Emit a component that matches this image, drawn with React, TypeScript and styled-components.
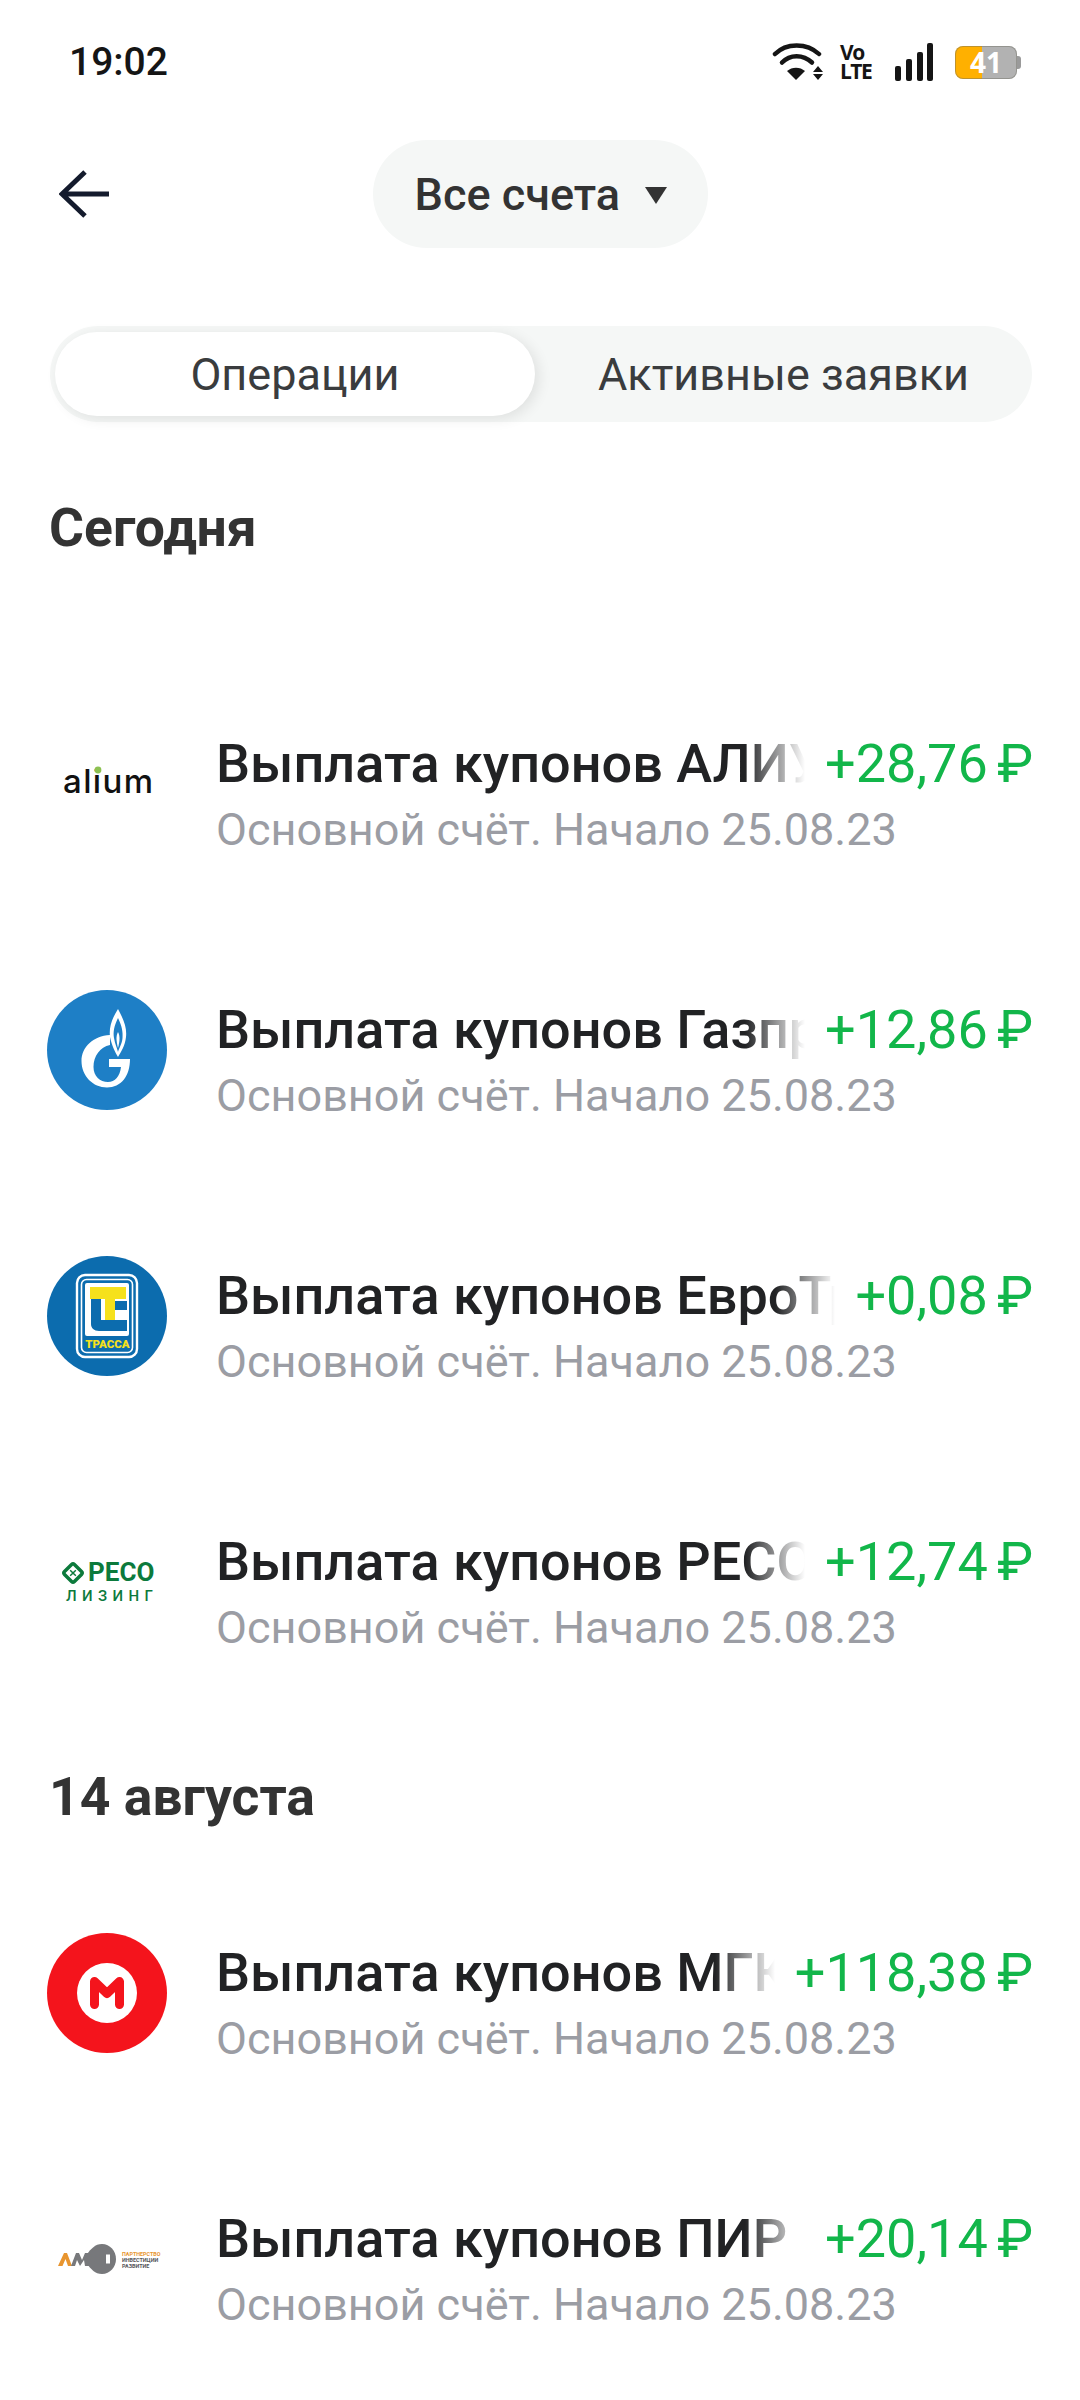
import React from 'react'
import styled, { createGlobalStyle } from 'styled-components'

const Global = createGlobalStyle`
  html, body {
    margin: 0;
    padding: 0;
    background: #fff;
  }
  body {
    font-family: Roboto, "Noto Sans", "Liberation Sans", sans-serif;
  }
`

const Screen = styled.div`
  width: 1080px;
  height: 2400px;
  overflow: hidden;
  background: #fff;
  box-sizing: border-box;
`

const StatusBar = styled.div`
  height: 132px;
  box-sizing: border-box;
  padding: 40px 60px 0 69px;
  display: flex;
  justify-content: space-between;
  align-items: flex-start;
`

const Clock = styled.div`
  font-size: 39px;
  line-height: 44px;
  font-weight: 500;
  color: #151515;
`

const StatusIcons = styled.div`
  display: flex;
  align-items: center;
  height: 44px;
`

const VoLte = styled.div`
  width: 32px;
  margin: 0 23px 0 16px;
  color: #151515;
  font-family: "Open Sans", Roboto, sans-serif;
  font-weight: 700;
  font-size: 21px;
  line-height: 19px;
  letter-spacing: -1.5px;
  span {
    display: block;
  }
`

const Battery = styled.div`
  position: relative;
  width: 62px;
  height: 33px;
  margin-left: 22px;
  margin-right: 3px;
  border-radius: 8px;
  background: linear-gradient(90deg, #ffb000 0 27px, #b2b2b2 27px 100%);
  box-shadow: inset 0 0 0 1px rgba(110, 110, 100, 0.45);
  color: #fff;
  font-family: "Open Sans", Roboto, sans-serif;
  font-weight: 700;
  font-size: 28px;
  line-height: 33px;
  text-align: center;
  &::after {
    content: '';
    position: absolute;
    right: -4px;
    top: 10px;
    width: 4px;
    height: 13px;
    border-radius: 0 3px 3px 0;
    background: #9a9a9a;
  }
`

const NavBar = styled.div`
  height: 124px;
  display: grid;
  grid-template-columns: 1fr auto 1fr;
  align-items: center;
  padding: 0 59px;
  box-sizing: border-box;
`

const BackButton = styled.div`
  display: flex;
  align-items: center;
`

const AccountPill = styled.div`
  height: 108px;
  width: 335px;
  box-sizing: border-box;
  border-radius: 54px;
  background: #f5f7f6;
  padding-left: 42px;
  display: flex;
  align-items: center;
  gap: 25px;
  font-size: 45px;
  color: #333;
  font-weight: 500;
`

const Caret = styled.div`
  width: 0;
  height: 0;
  margin-top: 3px;
  border-left: 11px solid transparent;
  border-right: 11px solid transparent;
  border-top: 17px solid #333;
`

const Tabs = styled.div`
  margin: 70px 48px 0 50px;
  height: 96px;
  box-sizing: border-box;
  padding: 6px 0 6px 5px;
  border-radius: 48px;
  background: #f5f7f6;
  display: flex;
`

const Tab = styled.div<{ $active?: boolean }>`
  flex: ${p => (p.$active ? '0 0 480px' : '1')};
  border-radius: 42px;
  display: flex;
  align-items: center;
  justify-content: center;
  font-size: 45px;
  color: #3a3c3e;
  background: ${p => (p.$active ? '#fff' : 'transparent')};
  box-shadow: ${p => (p.$active ? '4px 3px 14px rgba(0, 0, 0, 0.09)' : 'none')};
`

const DayTitle = styled.h2<{ $first?: boolean }>`
  margin: 0;
  padding: ${p => (p.$first ? '76px 49px 93px' : '52px 49px 33px')};
  font-size: 53.5px;
  line-height: 60px;
  font-weight: 700;
  color: #333;
`

const Row = styled.div`
  height: 266px;
  box-sizing: border-box;
  padding: 0 47px;
  display: flex;
  align-items: center;
  gap: 49px;
`

const LogoBox = styled.div`
  flex: 0 0 120px;
  height: 120px;
`

const RowBody = styled.div`
  flex: 1;
  min-width: 0;
  padding-top: 20px;
`

const TopLine = styled.div`
  display: flex;
  align-items: center;
  gap: 20px;
`

const RowTitle = styled.div`
  position: relative;
  flex: 1;
  min-width: 0;
  overflow: hidden;
  white-space: nowrap;
  font-size: 54px;
  line-height: 64px;
  font-weight: 500;
  color: #212224;
  &::after {
    content: '';
    position: absolute;
    right: 0;
    top: 0;
    bottom: 0;
    width: 60px;
    background: linear-gradient(90deg, rgba(255, 255, 255, 0), #fff 100%);
  }
`

const Amount = styled.div`
  flex: none;
  font-size: 54px;
  line-height: 64px;
  color: #12b64a;
  white-space: nowrap;
  word-spacing: -4px;
`

const RowSub = styled.div`
  margin-top: 8px;
  font-size: 45px;
  line-height: 52px;
  color: #9b9da4;
  white-space: nowrap;
`

const WifiIcon = () => (
  <svg width="52" height="38" viewBox="0 0 52 38">
    <g fill="none" stroke="#151515" strokeWidth="4.5" strokeLinecap="round">
      <path d="M3 11 C14 -0.500 35 -0.500 47 11" />
      <path d="M10 19.500 C18 11 31 11 40 19.500" />
    </g>
    <path d="M15 28 C20 23.500 28 23.500 33 28 L24 37 Z" fill="#151515" />
    <path d="M41 29 L46 23 L51 29 Z M41 31 L51 31 L46 37 Z" fill="#151515" />
  </svg>
)

const SignalIcon = () => (
  <svg width="38" height="38" viewBox="0 0 38 38">
    <g fill="#151515">
      <rect x="0" y="23" width="6" height="15" rx="2" />
      <rect x="11" y="16" width="6" height="22" rx="2" />
      <rect x="22" y="9" width="6" height="29" rx="2" />
      <rect x="32" y="0" width="6" height="38" rx="2" />
    </g>
  </svg>
)

const BackArrow = () => (
  <svg width="50" height="48" viewBox="0 0 50 48">
    <path
      d="M26 2 L3 24 L26 46 M3 24 L50 24"
      fill="none"
      stroke="#141b2d"
      strokeWidth="5"
    />
  </svg>
)

const AliumLogo = () => (
  <svg width="120" height="120" viewBox="0 0 120 120">
    <text x="16" y="69" fontFamily="Inter, Lato, sans-serif" fontWeight="500" fontSize="33" letterSpacing="1.400" fill="#111">
      alium
    </text>
    <circle cx="51" cy="46" r="3.400" fill="#8cc152" />
  </svg>
)

const GazpromLogo = () => (
  <svg width="120" height="120" viewBox="0 0 120 120">
    <circle cx="60" cy="60" r="60" fill="#1e7fc6" />
    <path
      d="M71 19 C64 30 62 38 63 47 C65 56 68 62 71 67 C74 62 78 56 79 47 C80 38 77 30 71 19 Z"
      fill="#fff"
    />
    <path
      d="M71 28 C67 36 66 42 67 48 C68 54 70 58 71 62 C72 58 75 54 75.500 48 C76 42 75 36 71 28 Z"
      fill="#1e7fc6"
    />
    <path
      d="M71 42 C69 46 69 50 71 58 C73 50 73 46 71 42 Z"
      fill="#fff"
    />
    <path
      d="M63 45 C46 46 34.500 57 34.500 71 C34.500 86 46 97.500 60 97.500 C74 97.500 83 86 83 69 L62 69 L62 77 L74 77 C73 86 68 92 61 92 C53 92 46.500 86 46.500 77 C46.500 66 53 57 63 55 Z"
      fill="#fff"
    />
  </svg>
)

const TrassaLogo = () => (
  <svg width="120" height="120" viewBox="0 0 120 120">
    <circle cx="60" cy="60" r="60" fill="#0c6cae" />
    <rect x="30" y="19" width="60" height="82" rx="8" fill="none" stroke="#fff" strokeWidth="2.400" />
    <rect x="34.500" y="23.500" width="51" height="73" rx="5" fill="none" stroke="#fff" strokeWidth="1.600" />
    <rect x="38" y="27" width="44" height="53" rx="2" fill="#fff" />
    <path d="M44 43 L58 43 L58 64 L80 64 L80 75 L52 75 C47 75 44 72 44 68 Z" fill="#0c6cae" />
    <rect x="54" y="43" width="4" height="21" fill="#fff" />
    <rect x="68" y="45" width="12" height="9" fill="#0c6cae" />
    <rect x="43" y="31" width="36" height="12" fill="#f6e11c" />
    <rect x="58" y="43" width="10" height="21" fill="#f6e11c" />
    <text x="60.500" y="92" textAnchor="middle" fontFamily="Roboto, sans-serif" fontWeight="900" fontSize="11.500" fill="#f6e11c">
      ТРАССА
    </text>
  </svg>
)

const ResoLogo = () => (
  <svg width="120" height="120" viewBox="0 0 120 120">
    <g transform="translate(26 51) rotate(45)">
      <rect x="-7" y="-7" width="14" height="14" rx="2" fill="none" stroke="#0c7a3c" strokeWidth="3.500" />
      <path d="M-4 0 L4 0 M0 -4 L0 4" stroke="#0c7a3c" strokeWidth="1.500" />
    </g>
    <text x="41" y="59" fontFamily="Roboto, sans-serif" fontWeight="700" fontSize="26" fill="#0c7a3c">
      РЕСО
    </text>
    <text x="19" y="79" fontFamily="Roboto, sans-serif" fontWeight="500" fontSize="15" letterSpacing="5.400" fill="#0c7a3c">
      ЛИЗИНГ
    </text>
  </svg>
)

const MgkLogo = () => (
  <svg width="120" height="120" viewBox="0 0 120 120">
    <circle cx="60" cy="60" r="60" fill="#f4141c" />
    <circle cx="60" cy="60" r="30" fill="#fff" />
    <path
      d="M47.500 71.500 L47.500 48.500 L60 60.500 L72.500 48.500 L72.500 71.500"
      fill="none"
      stroke="#f4141c"
      strokeWidth="9"
      strokeLinecap="round"
      strokeLinejoin="round"
    />
  </svg>
)

const AmoLogo = () => (
  <svg width="120" height="120" viewBox="0 0 120 120">
    <path d="M11 67 L17 54 L20 54 L25 67 L21 67 L18.500 60 L15.500 67 Z" fill="#e8952f" />
    <path d="M24 67 L29 54 L32 54 L35 61 L38 54 L42 54 L42 67 L38 67 L37 61 L33 67 L30 61 L28 67 Z" fill="#77787b" />
    <path d="M40 55 C44 50 48 45 55 45 C63 45 69 52 69 60 C69 68 63 75 55 75 C48 75 44 70 40 65 Z" fill="#77787b" />
    <rect x="59" y="55.500" width="4" height="9" fill="#fff" />
    <g fontFamily="Roboto, sans-serif" fontWeight="700" fontSize="5.400">
      <text x="75" y="57" fill="#e8952f">ПАРТНЕРСТВО</text>
      <text x="75" y="63" fill="#55565a">ИНВЕСТИЦИИ</text>
      <text x="75" y="69" fill="#55565a">РАЗВИТИЕ</text>
    </g>
  </svg>
)

type Payment = {
  name: string
  amount: string
  logo: React.ReactNode
}

const today: Payment[] = [
  { name: 'Выплата купонов АЛИУМ', amount: '+28,76 ₽', logo: <AliumLogo /> },
  { name: 'Выплата купонов Газпром', amount: '+12,86 ₽', logo: <GazpromLogo /> },
  { name: 'Выплата купонов ЕвроТранс', amount: '+0,08 ₽', logo: <TrassaLogo /> },
  { name: 'Выплата купонов РЕСО-Лизинг', amount: '+12,74 ₽', logo: <ResoLogo /> },
]

const august: Payment[] = [
  { name: 'Выплата купонов МГКЛ', amount: '+118,38 ₽', logo: <MgkLogo /> },
  { name: 'Выплата купонов ПИР', amount: '+20,14 ₽', logo: <AmoLogo /> },
]

function PaymentRow({ item }: { item: Payment }) {
  return (
    <Row>
      <LogoBox>{item.logo}</LogoBox>
      <RowBody>
        <TopLine>
          <RowTitle>{item.name}</RowTitle>
          <Amount>{item.amount}</Amount>
        </TopLine>
        <RowSub>Основной счёт. Начало 25.08.23</RowSub>
      </RowBody>
    </Row>
  )
}

export default function App() {
  return (
    <Screen>
      <Global />
      <StatusBar>
        <Clock>19:02</Clock>
        <StatusIcons>
          <WifiIcon />
          <VoLte>
            <span>Vo</span>
            <span>LTE</span>
          </VoLte>
          <SignalIcon />
          <Battery>41</Battery>
        </StatusIcons>
      </StatusBar>
      <NavBar>
        <BackButton>
          <BackArrow />
        </BackButton>
        <AccountPill>
          Все счета
          <Caret />
        </AccountPill>
      </NavBar>
      <Tabs>
        <Tab $active>Операции</Tab>
        <Tab>Активные заявки</Tab>
      </Tabs>
      <DayTitle $first>Сегодня</DayTitle>
      {today.map(item => (
        <PaymentRow key={item.name} item={item} />
      ))}
      <DayTitle>14 августа</DayTitle>
      {august.map(item => (
        <PaymentRow key={item.name} item={item} />
      ))}
    </Screen>
  )
}
